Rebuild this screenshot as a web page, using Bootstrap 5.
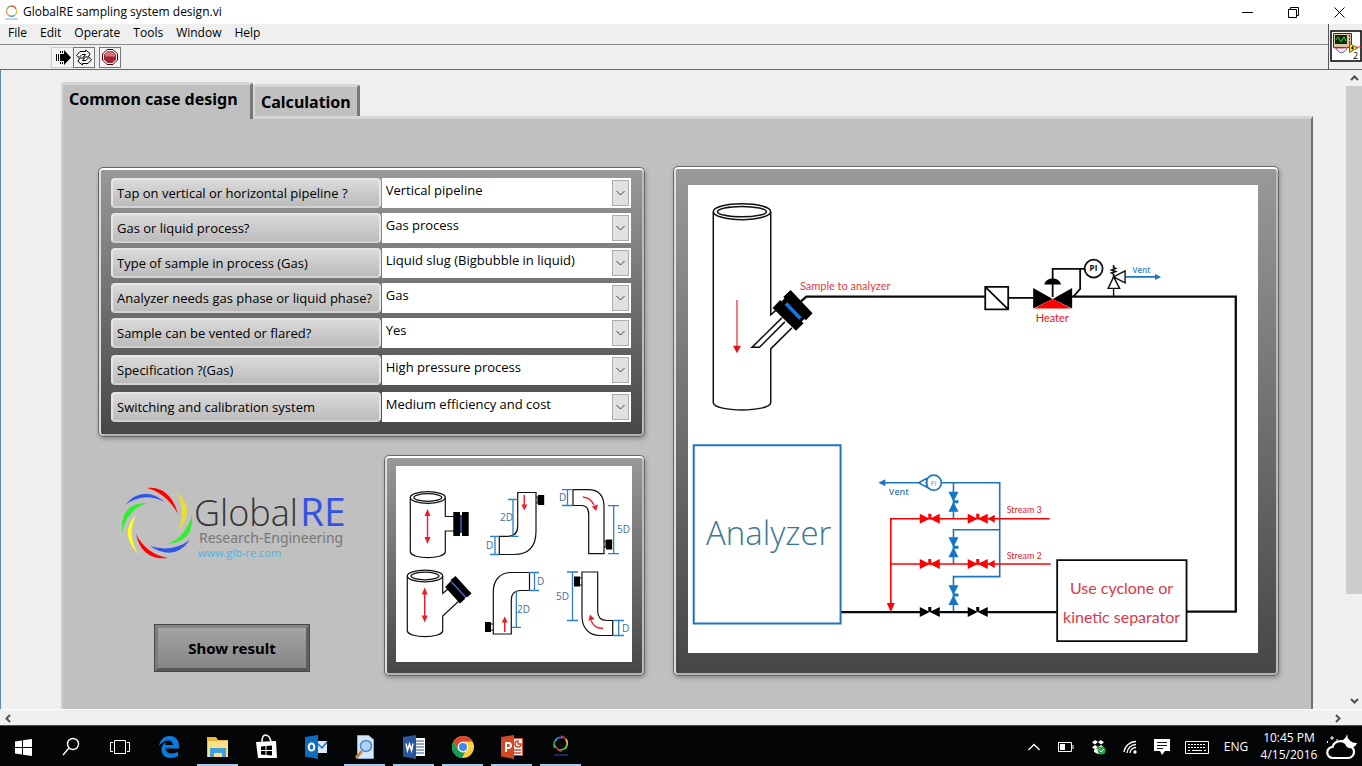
<!DOCTYPE html>
<html lang="en">
<head>
<meta charset="utf-8">
<meta name="viewport" content="width=device-width, initial-scale=1">
<title>GlobalRE sampling system design.vi</title>
<link href="https://cdn.jsdelivr.net/npm/bootstrap@5.3.0/dist/css/bootstrap.min.css" rel="stylesheet">
<script src="https://cdn.jsdelivr.net/npm/bootstrap@5.3.0/dist/js/bootstrap.bundle.min.js"></script>
<style>
  body { font-family: "Open Sans", "Noto Sans", sans-serif; font-size: 12px; line-height: 16px; color: #000; background: #efefef; height: 100vh; }
  svg { display: block; }
  svg text { font-family: "Open Sans", "Noto Sans", sans-serif; }
  svg .note { font-family: Lato, "Open Sans", sans-serif; }
  svg .tagline { font-family: "Noto Sans", sans-serif; }
  button { color: inherit; font: inherit; }

  .titlebar { height: 24px; background: #fff; padding-left: 4px; }
  .win-btn { width: 46px; height: 22px; border: 0; background: none; padding: 0; display: grid; place-items: center; }
  .menus { height: 21px; border-bottom: 1px solid #8c8c8c; padding: 1px 0 0 8px; gap: 13px; }
  .menus a { color: #000; text-decoration: none; }
  .toolrow { height: 25px; border-bottom: 1px solid #666; padding-left: 51px; }
  .tool { width: 22px; height: 21px; border: 1px solid #777; background: #f4f4f4; padding: 0; display: grid; place-items: center; }
  .tool-run { border-color: #ccc; border-right: 0; }
  .vi-cell { width: 34px; border-left: 1px solid #555; border-bottom: 1px solid #666; padding: 6px 0 0 1px; }

  .workspace { border-left: 1px solid #5b86b5; }
  .front { padding: 12px 33px 0 60px; }
  .tab { background: #c0c0c0; border: solid; border-width: 3px 3px 0 2px; border-color: #d6d6d6 #777 #c0c0c0 #d6d6d6; border-radius: 3px 3px 0 0; font-family: "Noto Sans", sans-serif; font-weight: 700; font-size: 16px; line-height: 24px; padding: 0 0 0 6px; text-align: left; }
  .tab-on { width: 192px; height: 37px; margin-bottom: -3px; padding-bottom: 6px; z-index: 1; }
  .tab-off { width: 107px; height: 32px; }
  .page { background: #c0c0c0; border: solid; border-width: 3px 2px 0 2px; border-color: #d6d6d6 #707070 #c0c0c0 #cfcfcf; padding: 47px 32px 0 35px; }
  .board { display: grid; grid-template-columns: 547fr 607fr; gap: 28px; align-items: start; }
  .bezel { background: linear-gradient(#999, #464646); border: 1px solid #686868; border-radius: 5px; box-shadow: inset 0 2px #fff, inset 2px 0 #ddd, inset -2px 0 #bbb, inset 0 -2px #b4b4b4, 1px 2px 4px #8a8a8a; }
  .bezel > svg { background: #fff; width: 100%; height: auto; }
  .bezel-main { padding: 18px 20px 22px 14px; }
  .bezel-form { padding: 10px 13px 14px 12px; margin-top: 1px; }
  .bezel-small { width: 261px; padding: 10px 12px 13px 11px; }

  .ask { display: grid; grid-template-columns: 270fr 249fr; gap: 1px; height: 30px; margin-bottom: 5px; }
  .ask-wide { margin-bottom: 7px; }
  .ask:last-child { margin-bottom: 0; }
  .ask label { background: linear-gradient(#dadada, #bcbcbc); border: 2px solid #e6e6e6; border-bottom-color: #d2d2d2; border-radius: 4px; font-size: 13px; line-height: 26px; padding-left: 4px; white-space: nowrap; }
  .pick { display: grid; background: #fff; }
  .pick > * { grid-area: 1 / 1; }
  .pick select { appearance: none; border: 0; background: none; width: 100%; font-size: 13px; padding: 0 22px 6px 4px; color: #000; }
  .pick-arrow { justify-self: end; width: 17px; height: 26px; margin: 2px; background: #e1e1e1; border: 1px solid #adadad; display: grid; place-items: center; pointer-events: none; }

  .lower { margin-top: 18px; }
  .brand-col { padding: 27px 0 4px 20px; }
  .show { width: 156px; height: 48px; margin-left: 36px; border: 4px solid; border-color: #858585 #606060 #585858 #7d7d7d; outline: 1px solid #484848; outline-offset: -1px; background: linear-gradient(#a3a3a3, #868686); font-family: "Noto Sans", sans-serif; font-weight: 700; font-size: 15px; padding: 0; }

  .vbar { width: 16px; background: #f0f0f0; }
  .vbar button, .hbar button { border: 0; background: none; padding: 0; width: 16px; height: 16px; display: grid; place-items: center; }
  .vthumb { flex: 506; background: #cdcdcd; }
  .vrest { flex: 99; }
  .hbar { height: 16px; background: #f0f0f0; border-top: 1px solid #fff; padding-right: 16px; }

  .taskbar { height: 41px; background: #040506; border-top: 1px solid #8a3a32; color: #fff; }
  .tk { width: 49px; border: 0; background: none; padding: 4px 0 0; display: grid; place-items: center; border-bottom: 2px solid transparent; }
  .tk-first { width: 46px; }
  .tk-open { width: 41px; margin: 0 4px; border-bottom-color: #a9c9ea; }
  .tr { width: 32px; border: 0; background: none; padding: 2px 0 0; display: grid; place-items: center; }
  .tr-kb { width: 38px; }
  .tr-lang, .tr-weather { width: 40px; }
  .clock { width: 66px; line-height: 17px; padding-top: 3px; }
</style>
</head>
<body class="d-flex flex-column overflow-hidden">

<header>
  <div class="titlebar d-flex align-items-center">
    <svg width="15" height="18" viewBox="0 0 15 18" fill="none" stroke-width="1.4"><path d="M3 6a5 5 0 0 1 4-3" stroke="#7bb661"/><path d="M7 3a5 5 0 0 1 5 3" stroke="#d86a5a"/><path d="M12 6a5 5 0 0 1-1 6" stroke="#d9c94e"/><path d="M11 12a5 5 0 0 1-5 1" stroke="#5b9bd5"/><path d="M6 13a5 5 0 0 1-3-7" stroke="#e0a060"/><path d="M1 16h13" stroke="#b9c2d8"/></svg>
    <span class="ms-1">GlobalRE sampling system design.vi</span>
    <div class="d-flex ms-auto">
      <button class="win-btn" aria-label="Minimize"><svg width="11" height="11" stroke="#000"><path d="M0 5.500h11"/></svg></button>
      <button class="win-btn" aria-label="Restore"><svg width="11" height="11" fill="none" stroke="#000"><path d="M.5 2.500h8v8h-8zM2.500 2.500v-2h8v8h-2"/></svg></button>
      <button class="win-btn" aria-label="Close"><svg width="11" height="11" stroke="#000"><path d="M.5.5l10 10M10.500.5l-10 10"/></svg></button>
    </div>
  </div>
  <div class="d-flex">
    <div class="flex-grow-1">
      <nav class="menus d-flex">
        <a href="#">File</a><a href="#">Edit</a><a href="#">Operate</a><a href="#">Tools</a><a href="#">Window</a><a href="#">Help</a>
      </nav>
      <div class="toolrow d-flex align-items-center">
        <button class="tool tool-run" aria-label="Run"><svg width="18" height="15" viewBox="0 0 18 15"><path d="M2.500 4v7M4.500 4v7" stroke="#000"/><path d="M6 4h4V0l7 7.500L10 15v-4H6z"/><path d="M6.500 1v2M8.500 1v2M6.500 12v2M8.500 12v2" stroke="#000"/></svg></button>
        <button class="tool" aria-label="Run continuously"><svg width="18" height="17" viewBox="0 0 18 17" fill="#fff" stroke="#000"><path d="M1.500 6.500L5 2.500h5.500V1L15 4.500 13.500 8h-5l2-2.500H7L4 8.500z"/><path d="M16.500 10.500L13 14.500H7.500V16L3 12.500 4.500 9h5l-2 2.500H11l3-3z"/></svg></button>
        <button class="tool ms-1" aria-label="Abort"><svg width="16" height="16" viewBox="0 0 16 16"><path d="M5 .5h6L15.500 5v6L11 15.500H5L.5 11V5z" fill="#fff" stroke="#400"/><path d="M5.500 2h5L14 5.500v5L10.500 14h-5L2 10.500v-5z" fill="#a8232f"/><path d="M5.500 2.500h5L13 5.500v2H3v-2z" fill="#d0747a"/></svg></button>
      </div>
    </div>
    <div class="vi-cell">
      <svg width="32" height="32" viewBox="0 0 32 32"><path fill="#fff" stroke="#000" stroke-width="1.500" d="M1 1h30v30H1z"/><path fill="#d9c3a0" stroke="#333" d="M3.500 3.500h18v14h-18z"/><path fill="#0b2a10" d="M5 5h12v9H5z"/><path fill="none" stroke="#28d048" d="M6 10l2-3 3 5 3-5 2 4"/><path d="M19 6h1M19 9h1M19 12h1" stroke="#333" stroke-width="2"/><path fill="none" stroke="#d33" d="M4 18h10l5-1h12"/><path fill="none" stroke="#73b" d="M6 18c2 6 9 6 11 0"/><path fill="#ffe32a" stroke="#7a6500" d="M19.500 13.500v9l8-4.500z"/><path d="M21 18h3M22.500 16.500v3" stroke="#000"/><text x="23" y="29" font-size="9">2</text></svg>
    </div>
  </div>
</header>

<main class="workspace d-flex flex-grow-1 overflow-hidden">
  <div class="front flex-grow-1 d-flex flex-column">
    <div class="d-flex align-items-end" role="tablist">
      <button class="tab tab-on" role="tab" aria-selected="true">Common case design</button>
      <button class="tab tab-off" role="tab" aria-selected="false">Calculation</button>
    </div>
    <div class="page flex-grow-1">
      <div class="board">
        <div>
          <form class="bezel bezel-form">
            <div class="ask"><label for="q1">Tap on vertical or horizontal pipeline ?</label><div class="pick"><select id="q1"><option>Vertical pipeline</option></select><span class="pick-arrow"><svg width="9" height="6" fill="none" stroke="#444"><path d="M.5 1l4 4 4-4"/></svg></span></div></div>
            <div class="ask"><label for="q2">Gas or liquid process?</label><div class="pick"><select id="q2"><option>Gas process</option></select><span class="pick-arrow"><svg width="9" height="6" fill="none" stroke="#444"><path d="M.5 1l4 4 4-4"/></svg></span></div></div>
            <div class="ask"><label for="q3">Type of sample in process (Gas)</label><div class="pick"><select id="q3"><option>Liquid slug (Bigbubble in liquid)</option></select><span class="pick-arrow"><svg width="9" height="6" fill="none" stroke="#444"><path d="M.5 1l4 4 4-4"/></svg></span></div></div>
            <div class="ask"><label for="q4">Analyzer needs gas phase or liquid phase?</label><div class="pick"><select id="q4"><option>Gas</option></select><span class="pick-arrow"><svg width="9" height="6" fill="none" stroke="#444"><path d="M.5 1l4 4 4-4"/></svg></span></div></div>
            <div class="ask ask-wide"><label for="q5">Sample can be vented or flared?</label><div class="pick"><select id="q5"><option>Yes</option></select><span class="pick-arrow"><svg width="9" height="6" fill="none" stroke="#444"><path d="M.5 1l4 4 4-4"/></svg></span></div></div>
            <div class="ask ask-wide"><label for="q6">Specification ?(Gas)</label><div class="pick"><select id="q6"><option>High pressure process</option></select><span class="pick-arrow"><svg width="9" height="6" fill="none" stroke="#444"><path d="M.5 1l4 4 4-4"/></svg></span></div></div>
            <div class="ask"><label for="q7">Switching and calibration system</label><div class="pick"><select id="q7"><option>Medium efficiency and cost</option></select><span class="pick-arrow"><svg width="9" height="6" fill="none" stroke="#444"><path d="M.5 1l4 4 4-4"/></svg></span></div></div>
          </form>

          <div class="lower d-flex justify-content-between">
            <div class="brand-col d-flex flex-column justify-content-between align-items-start">
              <svg width="236" height="80" viewBox="118 482 236 80" role="img" aria-label="GlobalRE Research-Engineering">
                <path fill="#f00" d="M147 488Q170 486 178 514Q166 493 147 488ZM136 534Q142 561 168 558Q146 554 136 534Z"/>
                <path fill="#2f55e8" d="M125 505Q143 484 165 502Q144 491 125 505ZM150 546Q174 562 190 540Q172 553 150 546Z"/>
                <path fill="#2ef02e" d="M122 532Q120 502 148 503Q128 508 122 532ZM192 516Q194 542 167 544Q184 539 192 516Z"/>
                <path fill="#ffff1e" d="M136 515Q118 533 139 555Q126 535 136 515Z"/><path fill="#eade36" d="M176 492Q197 509 178 532Q187 510 176 492Z"/>
                <text x="194" y="526" font-size="36" font-weight="300" fill="#333">Global</text>
                <text x="300" y="526" font-size="39" font-weight="400" fill="#3352e6">RE</text>
                <text class="tagline" x="199" y="543" font-size="14" fill="#777">Research-Engineering</text>
                <text x="198" y="557" font-size="11" fill="#4fb3e0">www.glb-re.com</text>
              </svg>
              <button class="show" type="button">Show result</button>
            </div>
            <div class="bezel bezel-small">
              <svg viewBox="396 466 236 196" role="img" aria-label="Tap positions on pipes">
                <g fill="none" stroke="#111" stroke-width="1.200">
                  <ellipse cx="427.800" cy="497.500" rx="17.500" ry="5.800"/><ellipse cx="427.800" cy="497.500" rx="14" ry="3.800"/>
                  <path d="M410.300 497.500V552C412 559.500 443.500 559.500 445.300 552V531H454M445.300 497.500V516.500H454"/>
                  <ellipse cx="425" cy="576" rx="17.700" ry="5.800"/><ellipse cx="425" cy="576" rx="14" ry="3.800"/>
                  <path d="M407.300 576V631C409 638.500 441 638.500 442.700 631V616L460 600M442.700 576V593.500L448 589"/>
                  <path d="M517.700 492.500H536V531C536 546 529 554.500 514 554.500H499.300V536.300H508Q517.700 536.300 517.700 526ZM536 497h2v6h-2"/>
                  <path d="M573 489.700H588C599 489.700 604 496 604 507V553.700H588.700V514Q588.700 505.500 581 505.500H573ZM604 541h2v6h-2"/>
                  <path d="M493.300 634V592C493.300 580 500 572.500 511 572.500H529.500V590.500H520Q511.300 591 511.300 600V634ZM493 624h-3v6h3"/>
                  <path d="M582 572H597.700V611Q597.700 620.500 607 620.500H612.700V635.500H600C588 635.500 582 627 582 616ZM582 578h-3v7h3"/>
                </g>
                <g fill="#000"><path d="M453.300 512h6.700v24h-6.700zM462 512h6.700v24H462zM459 515h4v18h-4z"/><path d="M445 587l5-5 15 17-5 4.500zM450.500 580l5-4 16 17.500-4.500 4zM449 583l4-4 15 16-4 4zM538 495h6.200v10H538zM606 539.500h6.200v10H606zM485 622h6v10h-6zM574 576.500h6v10h-6z"/></g>
                <g stroke="#4d6ee0" stroke-width="1.300"><path d="M461 515v18M451.500 582l14 15"/></g>
                <g fill="none" stroke="#2e7fc4" stroke-width="1.300"><path d="M513 499.500V536M508 499.500h9.500M509 536.300h9.500M495 536.300v18M490 536.300h9M490 554.500h9M567.500 490v15.500M562 489.700h11M562 505.500h11M613.700 505.700v48M608 505.700h11M608 553.700h11M534.500 572.500v18M529 572.500h10M529 590.500h10M516.300 591v36M512 627.300h9M572.500 572v48.500M567 572h11M567 620.500h11M618.700 620.500v15M613 620.500h11M613 635.500h11"/></g>
                <g fill="none" stroke="#ee1c25" stroke-width="1.400"><path d="M427.500 514v26M424.700 593v24M524.300 495v10M504.700 632v-10M583 497q8 1 11 8M603 628.500q-9 0-12-8"/></g>
                <path fill="#ee1c25" d="M427.500 509l3 7h-6zM427.500 544l3-7h-6zM424.700 587.500l3 7h-6zM424.700 622.500l3-7h-6zM524.300 510.500l3-6h-6zM504.700 616.500l3 6h-6zM596 511l2-6.500-6 2zM590 614.500l-1.500 6.500 6-2z"/>
                <g font-size="10" fill="#3c6e9c"><text x="500" y="521">2D</text><text x="486" y="549">D</text><text x="559" y="501">D</text><text x="617" y="533">5D</text><text x="537" y="585">D</text><text x="517" y="613">2D</text><text x="556" y="600">5D</text><text x="622" y="632">D</text></g>
              </svg>
            </div>
          </div>
        </div>

        <div class="bezel bezel-main">
          <svg viewBox="688 185 571 468" role="img" aria-label="Sampling system diagram">
            <g fill="none" stroke="#111" stroke-width="1.500">
              <ellipse cx="742" cy="211.700" rx="28.700" ry="8"/><ellipse cx="742" cy="211.700" rx="24.500" ry="5.200"/>
              <path d="M713.300 212V403C715 412.500 769 412.500 770.800 403V349L792 328M770.800 212V315L776 310.500M782 318L752 347.500H759.500L785 322"/>
            </g>
            <path d="M772.700 308l7.500-8 23.500 23.500-7.700 7.500zM783.300 297l7.400-7 22 23.300-6.700 7zM780 303l6-6 20 21-6 5z"/>
            <path d="M786 303.500l14.500 15" stroke="#1c75d8" stroke-width="3.600"/>
            <g fill="none" stroke="#0a0a0a" stroke-width="2.300"><path d="M801 301.500L806.500 296.700H985M1072 296.700H1236.300V612H1187"/><path d="M1009 298h25" stroke-width="1.800"/><path d="M841 612.500H921M940 612.500H969M987 612.500H1057" /></g>
            <g fill="#fff" stroke="#0a0a0a" stroke-width="1.800"><path d="M985.500 287h23v22.500h-23zM985.500 287l23 22.500"/><path fill="none" d="M1053 297V269H1085M1080.500 269V289L1074 296.500"/><circle cx="1094" cy="268.700" r="9"/><path d="M1057.500 560.500h129.500v81h-129.500z"/></g>
            <g fill="none" stroke="#111" stroke-width="1.400"><path d="M1114 277l-5.500 11.500h11.500zM1114 277l11.500-6v12zM1114 288.500v8"/><path d="M1114 277v-3l-2-1 4-1.500-4-1.500 4-1.500-2-1V265" stroke-width="1.600"/></g>
            <path d="M1033.500 288v20.500L1053 299zM1072.500 288v20.500L1053 299zM1044.500 284.500q2-6 8.500-6t8.500 6z"/>
            <path fill="#f00" d="M1053 299l18.500 9.500h-37z"/>
            <g fill="none" stroke="#1d75bd" stroke-width="1.600"><path d="M693.700 445.500H840.700V624H693.700Z" stroke-width="2"/><path d="M1126 277h31M884 483h35l8-4.500M919 483l8 4.500V478.500M942 483h58v94H953.700V612M953.700 483v36M1000 530H953.700V564"/><circle cx="934" cy="483" r="7.600"/></g>
            <g stroke="#f00" stroke-width="1.600" fill="none"><path d="M1050 519H891V605M1051 564.300H891"/></g>
            <path fill="#f00" d="M891 612.500l-4-9h8zM988 519l7-4v8zM988 564.300l7-4v8z"/>
            <path fill="#1d75bd" d="M878.500 483l7-3.500v7zM1161.500 277l-6-3v6z"/>
            <defs><path id="valve" d="M-10-5v10L0 0zM10-5v10L0 0zM-1.500-5h3v5h-3z"/></defs>
            <g fill="#f00"><use href="#valve" x="930" y="519"/><use href="#valve" x="978" y="519"/><use href="#valve" x="930" y="564.300"/><use href="#valve" x="978" y="564.300"/></g>
            <path d="M941 612.500h30" stroke="#000" stroke-width="1.500"/>
            <use href="#valve" x="930" y="612.500"/><use href="#valve" x="978" y="612.500"/>
            <g fill="#1476c6"><use href="#valve" transform="translate(953.700 502) rotate(90)"/><use href="#valve" transform="translate(953.700 547.500) rotate(90)"/><use href="#valve" transform="translate(953.700 595.500) rotate(90)"/></g>
            <path d="M737 300v48" stroke="#e34" stroke-width="1.300"/><path fill="#e0101c" d="M737 353.500l-4-7.500h8z"/>
            <text class="note" x="800" y="290" font-size="11" fill="#e23b4a">Sample to analyzer</text>
            <text class="note" x="1036" y="322" font-size="11" fill="#f01018">Heater</text>
            <text x="1090" y="271" font-size="8" font-weight="700">PI</text>
            <text x="931" y="486" font-size="7" fill="#5a9bc8">FI</text>
            <text x="1133" y="273" font-size="8" font-weight="600" fill="#2e86c8">Vent</text>
            <text x="889" y="495" font-size="9" font-weight="600" fill="#2e7fb8">Vent</text>
            <text class="note" x="1007" y="513" font-size="9" fill="#e8202c">Stream 3</text>
            <text class="note" x="1007" y="559" font-size="9" fill="#e8202c">Stream 2</text>
            <text x="706" y="545" font-size="33" font-weight="300" fill="#3a7699">Analyzer</text>
            <g font-size="16" fill="#dc3848" text-anchor="middle"><text class="note" x="1122" y="594">Use cyclone or</text><text class="note" x="1122" y="623">kinetic separator</text></g>
          </svg>
        </div>
      </div>
    </div>
  </div>
  <div class="vbar d-flex flex-column">
    <button aria-label="Scroll up"><svg width="9" height="6" fill="none" stroke="#505050" stroke-width="2"><path d="M1 5l3.500-3.500L8 5"/></svg></button>
    <div class="vthumb"></div><div class="vrest"></div>
    <button aria-label="Scroll down"><svg width="9" height="6" fill="none" stroke="#505050" stroke-width="2"><path d="M1 1l3.500 3.500L8 1"/></svg></button>
  </div>
</main>
<div class="hbar d-flex justify-content-between">
  <button aria-label="Scroll left"><svg width="6" height="9" fill="none" stroke="#505050" stroke-width="2"><path d="M5 1L1.500 4.500 5 8"/></svg></button>
  <button aria-label="Scroll right"><svg width="6" height="9" fill="none" stroke="#505050" stroke-width="2"><path d="M1 1l3.500 3.500L1 8"/></svg></button>
</div>

<footer class="taskbar d-flex">
  <button class="tk tk-first" aria-label="Start"><svg width="17" height="17" viewBox="0 0 17 17" fill="#fff"><path d="M0 2.500l7-1V8H0zM8 1.300L17 0v8H8zM0 9h7v6.500l-7-1zM8 9h9v8l-9-1.300z"/></svg></button>
  <button class="tk" aria-label="Search"><svg width="18" height="20" viewBox="0 0 18 20" fill="none" stroke="#fff" stroke-width="1.400"><circle cx="11" cy="7" r="5.500"/><path d="M7 11l-6 7"/></svg></button>
  <button class="tk" aria-label="Task view"><svg width="20" height="16" viewBox="0 0 20 16" fill="none" stroke="#fff"><path d="M4.500 1.500h11v13h-11zM3 3.500H.5v9H3M17 3.500h2.500v9H17"/></svg></button>
  <button class="tk" aria-label="Edge"><svg width="20" height="22" viewBox="0 0 20 22"><path fill="#0a7be0" d="M0 10C1 4 5 0 10.500 0 17 0 20 4.500 20 10v2.500H6.500c.3 3.500 3 5 6.200 5 2.200 0 4.300-.6 6.300-1.700V20c-2 1.300-4.700 2-7.500 2C6 22 2.500 18.500 2.500 13.500c0-3.300 1.800-6 5-7.500-.8 1-1.200 2-1.300 3h7.600C13.800 6 12.300 4.500 9.500 4.500 5.800 4.500 2.300 6.500 0 10z"/></svg></button>
  <button class="tk tk-open" aria-label="File Explorer"><svg width="22" height="22" viewBox="0 0 22 22"><path fill="#e8b93c" d="M0 1h9l2 3h10v17H0z"/><path fill="#fbe08a" d="M1 5h20v16H1z"/><path fill="#3f9fdc" d="M3 12h16v9h-4v-4H7v4H3z"/></svg></button>
  <button class="tk" aria-label="Store"><svg width="21" height="26" viewBox="0 0 21 26"><path fill="none" stroke="#fff" stroke-width="1.500" d="M6 8C6 3 7.500 1 9.500 1S14 3 15 8"/><path fill="#fff" d="M0 8l20-1 1 17-19 0z"/><path d="M5 12.500l4.500-.5v4H5zM10.500 12l5.500-.5V16h-5.500zM5 17h4.500v4L5 20.500zM10.500 17H16v4.500l-5.500-.5z"/></svg></button>
  <button class="tk" aria-label="Outlook"><svg width="22" height="24" viewBox="0 0 22 24"><path fill="#dceaf8" d="M12 6h10v12H12z"/><path fill="none" stroke="#1370c0" stroke-width="1.500" d="M12 8l5 5 5-6"/><path fill="#0f6cbd" d="M0 2l13-2v24L0 21.500z"/><ellipse cx="6.500" cy="12" rx="2.800" ry="3.600" fill="none" stroke="#fff" stroke-width="2"/></svg></button>
  <button class="tk tk-open" aria-label="Document search"><svg width="20" height="24" viewBox="0 0 20 24"><path fill="#d3e6fa" stroke="#86aed6" d="M2.500.5h11l5 4v19h-16z"/><path d="M1 23l6-7" stroke="#b98b4a" stroke-width="3"/><circle cx="11" cy="11" r="5.500" fill="#a9d4fb" stroke="#5a86b8" stroke-width="1.500"/></svg></button>
  <button class="tk tk-open" aria-label="Word"><svg width="22" height="24" viewBox="0 0 22 24"><path fill="#fff" d="M12 3h10v18H12z"/><path d="M13 6h8M13 9h8M13 12h8M13 15h8M13 18h8" stroke="#2b579a"/><path fill="#2b579a" d="M0 2l13-2v24L0 21.500z"/><path fill="none" stroke="#fff" stroke-width="1.500" d="M3 8.500l1.500 7 2-6.500 2 6.500 1.500-7"/></svg></button>
  <button class="tk tk-open" aria-label="Chrome"><svg width="22" height="22" viewBox="0 0 22 22"><circle cx="11" cy="11" r="11" fill="#ffcd40"/><path fill="#db4437" d="M1.500 5.500A11 11 0 0 1 20.500 5.500H11a5.500 5.500 0 0 0-4.800 8z"/><path fill="#0f9d58" d="M1.500 5.500l4.700 8.200A5.500 5.500 0 0 0 13 16l-3 6A11 11 0 0 1 1.500 5.500z"/><circle cx="11" cy="11" r="5.200" fill="#fff"/><circle cx="11" cy="11" r="4" fill="#4285f4"/></svg></button>
  <button class="tk tk-open" aria-label="PowerPoint"><svg width="22" height="24" viewBox="0 0 22 24"><path fill="#fff" stroke="#d24726" d="M11 3.500h10.500v17H11z"/><path fill="none" stroke="#d24726" stroke-width="1.500" d="M17 6a3 3 0 1 0 3 3h-3zM13 15h7M13 18h7"/><path fill="#d24726" d="M0 2l13-2v24L0 21.500z"/><path fill="none" stroke="#fff" stroke-width="2" d="M5 17V8h2.500a2.500 2.500 0 0 1 0 5H5"/></svg></button>
  <button class="tk tk-open" aria-label="GlobalRE"><svg width="18" height="24" viewBox="0 0 18 24" fill="none" stroke-width="1.600"><path d="M3 6q3-5 8-3" stroke="#3d6be0"/><path d="M9 1q5 1 6 7" stroke="#e03030"/><path d="M14 4q3 5-1 10" stroke="#d8c830"/><path d="M15 10q-2 5-8 5" stroke="#38c838"/><path d="M10 16q-5 0-7-6" stroke="#c04040"/><path d="M3 13q-3-5 2-9" stroke="#40b050"/><path d="M2 20h14" stroke="#26306c"/></svg></button>

  <div class="d-flex ms-auto">
    <button class="tr" aria-label="Show hidden icons"><svg width="12" height="8" fill="none" stroke="#fff" stroke-width="1.400"><path d="M.5 7L6 1.500 11.500 7"/></svg></button>
    <button class="tr" aria-label="Battery"><svg width="16" height="10" viewBox="0 0 16 10"><path fill="none" stroke="#fff" d="M.5.5h13v9H.5zM15 3v4"/><path fill="#fff" d="M2 2h5v6H2z"/></svg></button>
    <button class="tr" aria-label="Dropbox"><svg width="15" height="15" viewBox="0 0 15 15"><path fill="#fff" d="M4 0l3 2-3 2.500L1 2.500zM10 0l3 2.500-3 2L7 2zM4 5l3 2-3 2.500L1 7.500zM10 5l3 2.500-3 2L7 7zM3 10l4-2 3 2v3l-3 1-4-2z"/><circle cx="10.500" cy="10.500" r="4" fill="#27a844"/><path fill="none" stroke="#fff" d="M8.500 10.500l1.500 1.500 3-3"/></svg></button>
    <button class="tr" aria-label="Network"><svg width="14" height="14" viewBox="0 0 14 14" fill="none" stroke="#fff" stroke-width="1.300"><path d="M1 12A12 12 0 0 1 13 1.500M4 13a9 9 0 0 1 9-8.500M7 13a6 6 0 0 1 6-5.500"/><circle cx="12" cy="12" r="1" fill="#fff"/></svg></button>
    <button class="tr" aria-label="Notifications"><svg width="16" height="16" viewBox="0 0 16 16"><path fill="#fff" d="M0 0h16v12h-5l-3 4-2-4H0z"/><path stroke="#111" d="M3 3.500h10M3 6.500h10M3 9.500h6"/></svg></button>
    <button class="tr tr-kb" aria-label="Keyboard"><svg width="24" height="13" viewBox="0 0 24 13" fill="none" stroke="#fff"><path d="M.5.5h23v12H.5z"/><path stroke-dasharray="2 1" d="M3 3.500h18M3 6.500h18"/><path d="M3 9.500h2M7 9.500h10M19 9.500h2"/></svg></button>
    <button class="tr tr-lang">ENG</button>
    <div class="clock text-center">10:45 PM<br>4/15/2016</div>
    <button class="tr tr-weather" aria-label="Weather"><svg width="32" height="28" viewBox="0 0 32 28"><path fill="none" stroke="#fff" stroke-width="2.200" d="M7 25a5.500 5.500 0 0 1-.5-11 8 8 0 0 1 15-1 6 6 0 0 1 1 12z"/><path fill="#fff" d="M21 1a9 9 0 0 0 10 9 8 8 0 0 1-6 5q-4 1-5-4-2-2-5-3 5-2 6-7z"/><path stroke="#fff" d="M6 3v4M4 5h4M1.500 8v2M11 6v2"/></svg></button>
  </div>
</footer>
</body>
</html>
